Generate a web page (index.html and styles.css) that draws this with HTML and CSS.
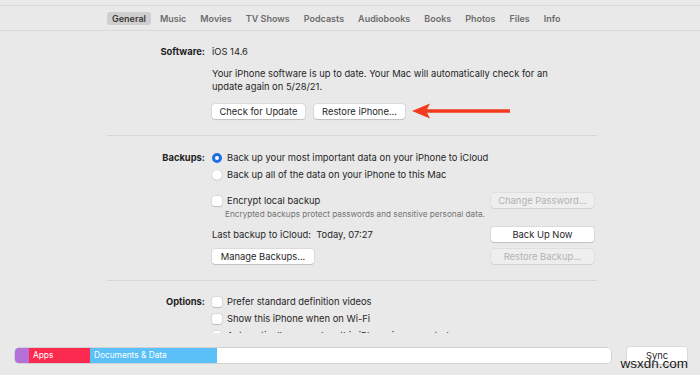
FILE: index.html
```html
<!DOCTYPE html>
<html lang="en">
<head>
    <meta charset="UTF-8">
    <meta name="viewport" content="width=device-width, initial-scale=1.0">
    <title>iPhone</title>
    <link rel="stylesheet" href="styles.css">
</head>
<body>
  <div class="top-gap"></div>

  <nav class="tabs">
    <span class="tab active">General</span>
    <span class="tab">Music</span>
    <span class="tab">Movies</span>
    <span class="tab">TV Shows</span>
    <span class="tab">Podcasts</span>
    <span class="tab">Audiobooks</span>
    <span class="tab">Books</span>
    <span class="tab">Photos</span>
    <span class="tab">Files</span>
    <span class="tab">Info</span>
  </nav>

  <main class="pane">
    <!-- Software -->
    <section class="section software">
      <div class="label">Software:</div>
      <div class="field">
        <div class="line">iOS 14.6</div>
        <p class="para">Your iPhone software is up to date. Your Mac will automatically check for an<br>update again on 5/28/21.</p>
        <div class="btn-row">
          <button class="btn">Check for Update</button>
          <button class="btn">Restore iPhone...</button>
          <svg class="arrow" width="100" height="16" viewBox="0 0 100 16">
            <path d="M0 8 L18 0.5 L15 6.3 L98 6.3 L98 9.7 L15 9.7 L18 15.5 Z" fill="#f23a1e"/>
          </svg>
        </div>
      </div>
    </section>

    <!-- Backups -->
    <section class="section backups">
      <div class="label">Backups:</div>
      <div class="field">
        <label class="line choice"><span class="radio on"></span>Back up your most important data on your iPhone to iCloud</label>
        <label class="line choice"><span class="radio"></span>Back up all of the data on your iPhone to this Mac</label>
        <div class="split first">
          <label class="choice"><span class="box"></span>Encrypt local backup</label>
          <button class="btn side" disabled>Change Password...</button>
        </div>
        <p class="note">Encrypted backups protect passwords and sensitive personal data.</p>
        <div class="split">
          <span>Last backup to iCloud:&nbsp; Today, 07:27</span>
          <button class="btn side">Back Up Now</button>
        </div>
        <div class="split">
          <button class="btn">Manage Backups...</button>
          <button class="btn side" disabled>Restore Backup...</button>
        </div>
      </div>
    </section>

    <!-- Options -->
    <section class="section options">
      <div class="label">Options:</div>
      <div class="field">
        <label class="line choice"><span class="box"></span>Prefer standard definition videos</label>
        <label class="line choice"><span class="box"></span>Show this iPhone when on Wi-Fi</label>
        <label class="line choice"><span class="box"></span>Automatically sync when this iPhone is connected</label>
        <label class="line choice"><span class="box"></span>Manually manage music, movies and TV shows</label>
      </div>
    </section>
  </main>

  <footer class="footer">
    <div class="storage">
      <span class="seg purple"></span>
      <span class="seg red">Apps</span>
      <span class="seg blue">Documents &amp; Data</span>
      <span class="seg free"></span>
    </div>
    <button class="btn sync">Sync</button>
    <span class="watermark">wsxdn.com</span>
  </footer>
</body>
</html>
```

FILE: styles.css
```css
/* 基本設定 */
html, body {
  margin: 0;
  padding: 0;
  width: 100%;
  height: 375px;
  overflow: hidden;
}

body {
  display: flex;
  flex-direction: column;
  background: #e9e9e9;
  font-family: Inter, 'Liberation Sans', sans-serif;
  font-size: 9.4px;
  color: #262626;
}

.top-gap {
  height: 5px;
  flex: none;
}

/* 分頁列 */
.tabs {
  flex: none;
  height: 24px;
  display: flex;
  align-items: center;
  gap: 4px;
  padding-left: 107px;
  border-top: 1px solid #d8d8d8;
  border-bottom: 1px solid #d8d8d8;
}

.tab {
  padding: 1px 5px;
  border-radius: 3px;
  font-weight: 600;
  font-size: 9px;
  line-height: 11px;
  color: #6c6c6c;
}

.tab.active {
  background: #cfcfcf;
  color: #3c3c3c;
}

/* 內容區 */
.pane {
  flex: none;
  height: 302px;
  overflow: hidden;
}

.section {
  display: grid;
  grid-template-columns: 98px 385px;
  column-gap: 7px;
  width: 490px;
  margin-left: 107px;
  border-bottom: 1px solid #d6d6d6;
}

.software {
  padding: 12px 0 16px;
}

.backups {
  padding: 13px 0 16px;
}

.options {
  padding: 12px 0 0;
  border-bottom: none;
}

.label {
  text-align: right;
  font-weight: 700;
  line-height: 17px;
  color: #1e1e1e;
}

.line {
  line-height: 17px;
}

.para {
  margin: 7px 0 0;
  line-height: 13px;
}

.btn-row {
  display: flex;
  align-items: center;
  gap: 9px;
  margin-top: 10px;
}

.btn {
  height: 15px;
  padding: 0 6px;
  border: none;
  border-radius: 3px;
  background: #ffffff;
  box-shadow: 0 0 0 0.5px rgba(0,0,0,0.12), 0 1px 1px rgba(0,0,0,0.12);
  font-family: inherit;
  font-size: 9.4px;
  color: #262626;
  line-height: 15px;
}

.btn:disabled {
  background: #eeeeee;
  color: #b2b2b2;
  box-shadow: 0 0 0 0.5px rgba(0,0,0,0.08), 0 1px 1px rgba(0,0,0,0.06);
}

.btn-row .btn:first-child {
  width: 93px;
}

.btn-row .btn:nth-child(2) {
  width: 91px;
}

.arrow {
  margin-left: -2px;
}

/* 勾選與單選 */
.choice {
  display: flex;
  align-items: center;
  gap: 5px;
}

.radio, .box {
  flex: none;
  width: 10px;
  height: 10px;
  background: #ffffff;
  box-shadow: 0 0 0 0.5px rgba(0,0,0,0.1), 0 0.5px 1px rgba(0,0,0,0.15);
}

.radio {
  border-radius: 50%;
  box-sizing: border-box;
}

.radio.on {
  background: #ffffff;
  border: 3px solid #1f6fe0;
  box-shadow: none;
}

.box {
  border-radius: 2.5px;
}

.split {
  display: flex;
  align-items: center;
  justify-content: space-between;
  height: 15px;
  margin-top: 7px;
  padding-right: 3px;
}

.split.first {
  margin-top: 10px;
}

.split .btn:not(.side) {
  width: 102px;
}

.btn.side {
  width: 103px;
}

.note {
  margin: 1px 0 0 13px;
  font-size: 8.2px;
  line-height: 11px;
  color: #747474;
}

/* 底部儲存空間列 */
.footer {
  position: relative;
  flex: none;
  display: flex;
  align-items: flex-start;
  gap: 16px;
  padding: 15px 0 0 15px;
}

.storage {
  display: flex;
  width: 596px;
  height: 15px;
  border-radius: 4px;
  overflow: hidden;
  box-shadow: 0 0 0 0.5px rgba(0,0,0,0.2);
  font-size: 8.3px;
  line-height: 15px;
  color: #ffffff;
}

.seg {
  padding-left: 4px;
  box-sizing: border-box;
}

.purple {
  width: 14px;
  background: #b46fd8;
}

.red {
  width: 61px;
  background: #fd2a4f;
}

.blue {
  width: 127px;
  background: #5ac0f7;
}

.free {
  flex: 1;
  background: #ffffff;
}

.btn.sync {
  width: 60px;
  height: 17px;
  margin-top: -1px;
}

.watermark {
  position: absolute;
  right: 12px;
  top: 23px;
  font-family: 'Liberation Sans', sans-serif;
  font-size: 13.5px;
  color: #1a1a1a;
}
```
